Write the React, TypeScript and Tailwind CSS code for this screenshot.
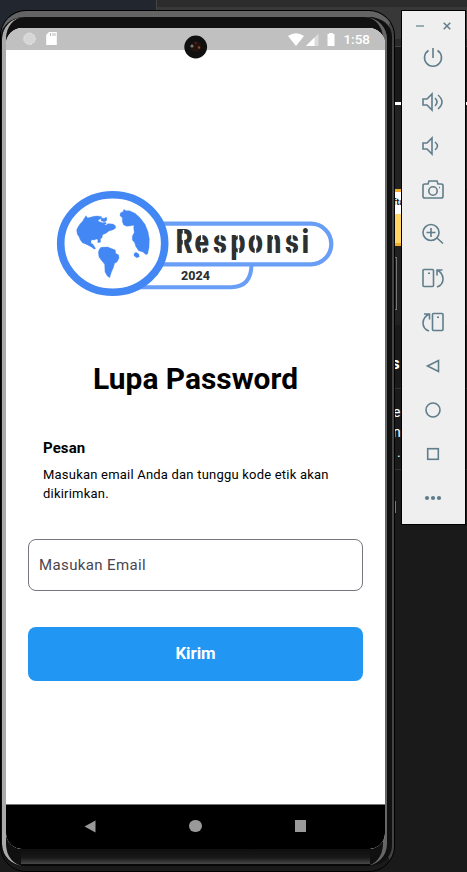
import React from "react";

const letters: [string, number][] = [
  ["R", 184.3], ["e", 201.7], ["s", 220], ["p", 238], ["o", 255.5], ["n", 273.7], ["s", 292], ["i", 305.5],
];

function Logo() {
  return (
    <svg className="block" width="280" height="110" viewBox="55 188 280 110">
      <path d="M130 287.2H231Q251.500 287.200 251.500 264" fill="none" stroke="#699ef7" strokeWidth="4" />
      <rect x="110" y="223.700" width="221.300" height="40.600" rx="20.300" fill="#fff" stroke="#699ef7" strokeWidth="4.200" />
      <ellipse cx="112.700" cy="243.500" rx="52" ry="48.800" fill="#fff" stroke="#4387f4" strokeWidth="7.600" />
      <g fill="#4387f4" transform="translate(45 180) scale(.33333)" strokeLinejoin="round" stroke="#4387f4" strokeWidth="1">
        <path d="M123 107L128 114L147 109L158 108L170 110L170 115L160 120L160 124L166 126L173 128L182 127L184 131L178 133L183 136L186 133L190 131L204 132L211 137L212 144L205 149L192 153L183 160L173 164L171 173L166 177L167 186L161 188L158 187L159 179L154 177L148 180L141 179L138 183L138 190L144 193L149 201L152 206L147 207L139 201L128 195L112 188L106 180L102 170L97 163L95 150L99 141L105 132L113 123L119 113Z" />
        <path d="M169 115L180 115L183 111L186 116L184 123L177 125L168 122Z" />
        <path d="M237 88L242 92L253 92L270 100L285 113L300 133L309 155L313 177L312 203L308 221L303 224L294 216L281 212L272 199L269 188L262 180L262 169L268 157L266 145L267 136L258 137L246 139L236 135L232 125L232 113L225 107L226 99L234 95Z" />
        <path d="M168 202L188 201L203 207L211 210L212 220L221 225L222 235L216 246L209 250L205 263L199 277L194 293L187 288L180 276L179 253L169 241L162 231L160 217L163 208Z" />
        <path d="M273 217L281 222L283 230L275 233L267 227L267 221Z" />
      </g>
      <g fill="#2d3030" fontFamily="Roboto, sans-serif" fontWeight="900">
        {letters.map(([c, x], i) => (
          <text key={i} transform={`translate(${x} 253.300) scale(.84 1.03)`} fontSize="31.500" textAnchor="middle">{c}</text>
        ))}
        <text x="181" y="279.700" fontSize="12.500" fontWeight="800" textLength="29" lengthAdjust="spacing" transform="translate(0 0)">2024</text>
      </g>
      <path d="M183.500 230v24M201.700 235v6M201.700 247v7M220 235v6M220 248v6M238.500 235v5M238.500 249v5M255.500 235v6M255.500 248v6M273.700 235v6M292 235v6M292 248v6" stroke="#fff" strokeWidth="1.500" />
    </svg>
  );
}

function StatusBar() {
  return (
    <header className="flex h-[22px] shrink-0 items-center justify-between bg-[#c0c0c0] pl-[17px] pr-[15px]">
      <svg width="36" height="14" viewBox="23 32 36 14">
        <circle cx="29.500" cy="38.700" r="5.700" fill="#d6d6d6" stroke="#e8e8e8" strokeDasharray="2 1" />
        <path d="M49 32H56.800V45H46.200V35Z" fill="#fff" />
        <path d="M50.500 33v3M53 33v3M55 33v3" stroke="#bbb" />
      </svg>
      <div className="flex items-center gap-[7px]">
        <svg width="48" height="15" viewBox="290.500 31 48 15" fill="#fff">
          <path d="M290.500 35Q298.500 29.500 306.500 35L298.500 45Z" />
          <path d="M321 32.500V45H308.500Z" fill="#dcdcdc" />
          <path d="M317 36.500V45H308.500Z" />
          <path d="M330 33h1.500v-1h4v1h1.500v12H330Z" />
        </svg>
        <span className="pt-px font-[Roboto,sans-serif] text-[13.500px] font-medium leading-none text-white">1:58</span>
      </div>
    </header>
  );
}

function NavBar() {
  return (
    <nav className="flex h-[45px] shrink-0 items-center justify-between rounded-b-[15px] border-t border-[#777] bg-black pb-[2px] pl-[78px] pr-[79px]">
      <svg width="12" height="13" viewBox="0 0 12 13"><path d="M.500 6.500L11.500 .500V12.500Z" fill="#999" /></svg>
      <span className="size-[12.500px] rounded-full bg-[#999]" />
      <span className="size-[11.500px] bg-[#999]" />
    </nav>
  );
}

function Phone() {
  return (
    <section className="absolute left-0 top-[10px] h-[862px] w-[395px] rounded-[26px] border border-black bg-[#111]">
      <div className="h-full rounded-[25px] border-r-2 border-b-[5px] border-t-[6px] border-r-[#444] border-b-[#1a1a1a] border-t-[#646464] pr-[2px]">
        <div className="relative flex h-full flex-col rounded-[22px] bg-[#101010]">
          <div className="absolute inset-y-0 left-px w-9 overflow-hidden rounded-l-[22px]">
            <div className="h-full w-[70px] rounded-[22px] border-l-4 border-[#aaa] border-y-0" />
          </div>
          <div className="absolute inset-y-0 right-0 w-9 overflow-hidden rounded-r-[22px]">
            <div className="absolute inset-y-0 right-[3px] w-[70px] rounded-[22px] border-r-4 border-[#666] border-y-0" />
          </div>
          <div className="absolute inset-x-5 bottom-0 h-[15px] border-b-2 border-[#080808] bg-linear-to-b from-[#111] via-[#181818] to-[#484848]" />
          <div className="relative ml-[5px] mt-[11px] flex h-[821px] w-[379px] flex-col overflow-hidden rounded-[16px] bg-white font-[Roboto,sans-serif]">
            <StatusBar />
            <main className="flex flex-1 flex-col pt-[138px]">
              <div className="ml-[49px] h-[110px]"><Logo /></div>
              <h1 className="mt-[63px] text-center text-[29.900px] font-bold leading-9 text-black">Lupa Password</h1>
              <section className="ml-[37px] mt-[41px] text-black">
                <h2 className="text-[15px] font-bold leading-5 tracking-[.1px]">Pesan</h2>
                <p className="mt-2 w-[310px] text-[13px] leading-[18.500px] tracking-[.21px]">Masukan email Anda dan tunggu kode etik akan dikirimkan.</p>
              </section>
              <input className="mx-[22px] mt-[36px] h-[52px] rounded-[8px] border border-[#79747e] bg-white px-[10px] text-[15px] tracking-[.38px] text-[#49454f] placeholder:text-[#49454f]" placeholder="Masukan Email" />
              <button className="mx-[22px] mt-[36px] h-[54px] rounded-[8px] bg-[#2196f3] text-[16.800px] font-bold text-white">Kirim</button>
            </main>
            <NavBar />
          </div>
          <svg className="absolute left-[183px] top-[18px]" width="24" height="24" viewBox="0 0 24 24">
            <circle cx="11.700" cy="12" r="11.400" fill="#101010" />
            <circle cx="11.700" cy="11.700" r="5.500" fill="#24120f" />
            <circle cx="8" cy="11" r="1.600" fill="#777b70" />
            <circle cx="15" cy="12.500" r="1.200" fill="#805020" />
            <circle cx="11.700" cy="8" r="1" fill="#55242d" />
          </svg>
        </div>
      </div>
    </section>
  );
}

const icons: React.ReactNode[] = [
  <><path d="M7.500 4.500A8.500 8.500 0 1 0 16.500 4.500" /><path d="M12 2v10" /></>,
  <><path d="M2 9v6h4l5 5V4L6 9Z" /><path d="M14 8q4 4 0 8M17 5q8 7 0 14" /></>,
  <><path d="M2 9v6h4l5 5V4L6 9Z" /><path d="M14 8q5 4 0 8" /></>,
  <><path d="M2 7.500Q2 6 4 6h3l1-3h8l1 3h3q2 0 2 1.500v11q0 1.500-2 1.500H4q-2 0-2-1.500Z" /><circle cx="12" cy="13" r="4.200" /><path d="M18 9.500h1" /></>,
  <><circle cx="10" cy="10.500" r="8" /><path d="M10 6v9M5.500 10.500h9M16 16l6 5.500" /></>,
  <><rect x="2" y="3.500" width="10.500" height="17" rx="1" /><path d="M7 7.200h2M21.500 4H16v5.500M16 4q6 3 6 9t-6 8" /></>,
  <><rect x="11.500" y="3.500" width="10.500" height="17" rx="1" /><path d="M16 7.200h2M3 4h5.500v5.500M8.500 4Q2 7 2 13t6 8" /></>,
  <path d="M6.500 12L17.500 6.500v11Z" />,
  <circle cx="12" cy="12" r="7" />,
  <rect x="6.700" y="6.700" width="10.600" height="10.600" />,
  <g fill="#607d8b" stroke="none"><circle cx="6" cy="12" r="2.100" /><circle cx="12" cy="12" r="2.100" /><circle cx="18" cy="12" r="2.100" /></g>,
];

function Toolbar() {
  return (
    <aside className="absolute left-[401px] top-[10px] flex h-[515px] w-[65px] flex-col border border-black bg-[#efefef]">
      <div className="flex h-[25px] items-end justify-between pl-[14px] pr-[14px]">
        <span className="mb-[9px] h-[2px] w-2 bg-[#9aacb3]" />
        <svg className="mb-[6px]" width="8" height="8" viewBox="0 0 8 8"><path d="M.7.700l6.600 6.600M7.300.700L.7 7.300" stroke="#607d8b" strokeWidth="1.500" /></svg>
      </div>
      <div className="flex flex-col items-center gap-[20px] pt-[10px] pr-px">
        {icons.map((icon, i) => (
          <svg key={i} width="24" height="24" viewBox="0 0 24 24" fill="none" stroke="#607d8b" strokeWidth="1.600">{icon}</svg>
        ))}
      </div>
    </aside>
  );
}

function Desktop() {
  return (
    <div className="flex h-full flex-col overflow-hidden bg-[#1a1a1a]">
      <div className="flex h-[39px] bg-[#22262f]">
        <div className="ml-[156px] flex-1 border-l border-[#444] bg-[#383838]"><div className="h-[7px] bg-[#2c2c2c]" /></div>
      </div>
      <div className="h-[8px] border-b border-[#444] bg-[#292929]" />
      <div className="h-[55px] bg-[#191919]" />
      <div className="h-[3px] bg-white" />
      <div className="h-[84px] bg-[#222]" />
      <div className="h-[57px] w-[466px] border-y-[3px] border-[#edac2b] bg-[#ffd462]">
        <div className="h-[22px] bg-white pl-[393px] font-[Roboto,sans-serif] text-[9px] font-bold leading-5 text-[#222]">fta</div>
      </div>
      <div className="h-[79px] bg-[#222] pt-[11px]"><div className="ml-[390px] h-[53px] w-[7px] border border-[#777]" /></div>
      <div className="h-[64px] border-b border-[#333] bg-[#1a1a1a] pl-[391px] pt-[26px] font-[Roboto,sans-serif] text-[17px] font-bold leading-6 text-white">s</div>
      <div className="flex h-[81px] flex-col border-b border-[#333] pl-[393px] pt-[13px] font-[Roboto,sans-serif] text-[14px] leading-5 text-white"><span>e</span><span>n</span><span className="pl-1">.</span></div>
      <div className="ml-[395px] mt-[31px] h-[12px] w-px bg-[#777]" />
    </div>
  );
}

export default function App() {
  return (
    <div className="relative h-[872px] w-[467px] overflow-hidden bg-[#1a1a1a]">
      <Desktop />
      <Phone />
      <Toolbar />
    </div>
  );
}
